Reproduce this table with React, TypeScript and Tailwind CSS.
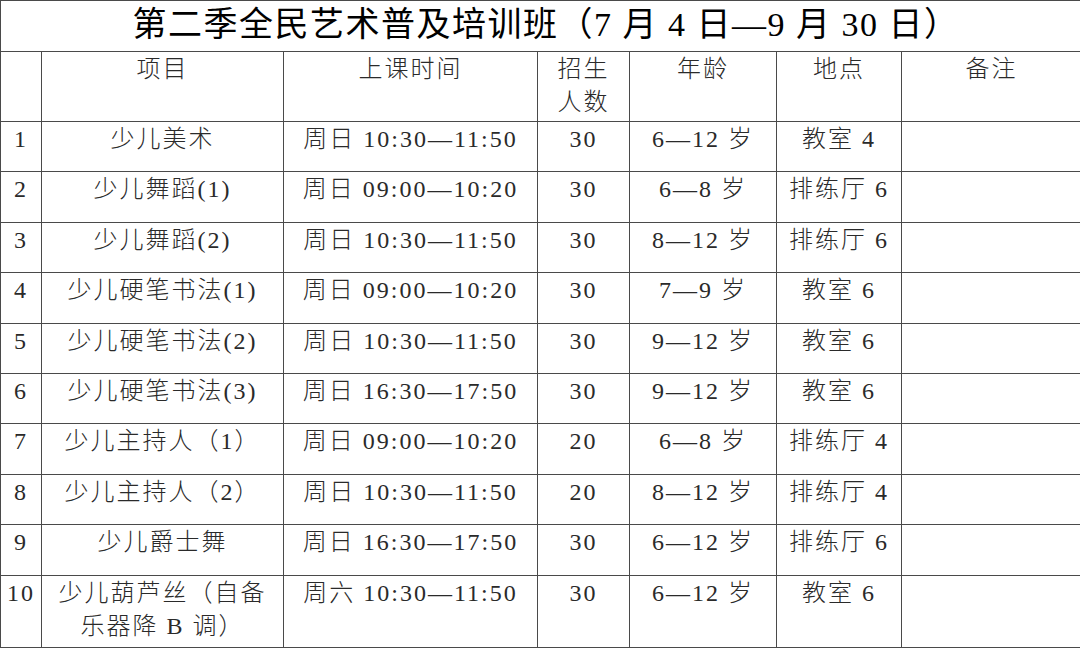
const rows: [string, string, string, string, string, string][] = [
  ["1", "少儿美术", "周日 10:30—11:50", "30", "6—12 岁", "教室 4"],
  ["2", "少儿舞蹈(1)", "周日 09:00—10:20", "30", "6—8 岁", "排练厅 6"],
  ["3", "少儿舞蹈(2)", "周日 10:30—11:50", "30", "8—12 岁", "排练厅 6"],
  ["4", "少儿硬笔书法(1)", "周日 09:00—10:20", "30", "7—9 岁", "教室 6"],
  ["5", "少儿硬笔书法(2)", "周日 10:30—11:50", "30", "9—12 岁", "教室 6"],
  ["6", "少儿硬笔书法(3)", "周日 16:30—17:50", "30", "9—12 岁", "教室 6"],
  ["7", "少儿主持人（1）", "周日 09:00—10:20", "20", "6—8 岁", "排练厅 4"],
  ["8", "少儿主持人（2）", "周日 10:30—11:50", "20", "8—12 岁", "排练厅 4"],
  ["9", "少儿爵士舞", "周日 16:30—17:50", "30", "6—12 岁", "排练厅 6"],
];

const cell = "border-[1.5px] border-[#4a4a4a] align-top text-center pt-[1px] leading-[33px]";

const App = () => {
  return (
    <div
      className="w-[1080px] h-[648px] overflow-hidden bg-white text-[#2a2a2a]"
      style={{ fontFamily: '"Liberation Serif", "Noto Sans CJK SC", serif' }}
    >
      <table className="table-fixed border-collapse w-[1081px] text-[24px] tracking-[2px] font-light">
        <colgroup>
          <col className="w-[41px]" />
          <col className="w-[242px]" />
          <col className="w-[254px]" />
          <col className="w-[92px]" />
          <col className="w-[147px]" />
          <col className="w-[125px]" />
          <col className="w-[180px]" />
        </colgroup>
        <tbody>
          <tr className="h-[51px]">
            <td
              colSpan={7}
              className="border-[1.5px] border-[#4a4a4a] text-center align-middle text-[34px] tracking-[1.5px] font-normal text-black leading-none pb-[2px] pl-[10px]"
            >
              第二季全民艺术普及培训班（7 月 4 日—9 月 30 日）
            </td>
          </tr>
          <tr className="h-[70px]">
            <td className={cell}></td>
            <td className={cell}>项目</td>
            <td className={cell}>上课时间</td>
            <td className={cell}>
              招生
              <br />
              人数
            </td>
            <td className={cell}>年龄</td>
            <td className={cell}>地点</td>
            <td className={cell}>备注</td>
          </tr>
          {rows.map((r) => (
            <tr key={r[0]} className="h-[50.4px]">
              {r.map((v, i) => (
                <td key={i} className={cell}>
                  {v}
                </td>
              ))}
              <td className={cell}></td>
            </tr>
          ))}
          <tr className="h-[72px]">
            <td className={cell}>10</td>
            <td className={cell}>
              少儿葫芦丝（自备
              <br />
              乐器降 B 调）
            </td>
            <td className={cell}>周六 10:30—11:50</td>
            <td className={cell}>30</td>
            <td className={cell}>6—12 岁</td>
            <td className={cell}>教室 6</td>
            <td className={cell}></td>
          </tr>
        </tbody>
      </table>
    </div>
  );
};

export default App;
